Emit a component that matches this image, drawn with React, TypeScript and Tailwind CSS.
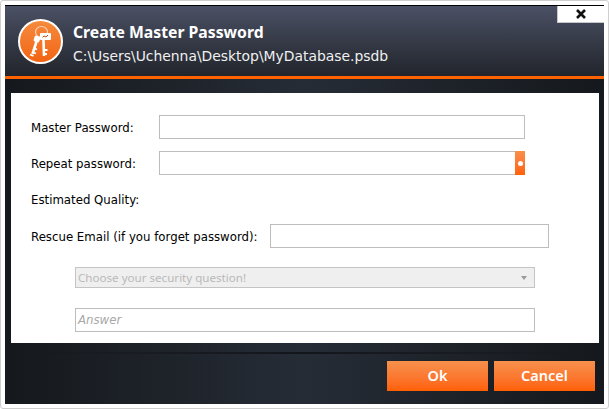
const font = { fontFamily: '"DejaVu Sans", sans-serif' };
const noto = { fontFamily: '"Noto Sans", sans-serif' };

function KeysIcon() {
  return (
    <svg width="34" height="38" viewBox="0 0 34 38" fill="none">
      <ellipse cx="17.5" cy="10" rx="6" ry="5.5" stroke="#f9d3b8" strokeWidth="1.2" />
      {/* back key */}
      <rect x="10" y="14" width="6" height="6" rx="1.5" fill="#fff" transform="rotate(18 13 17)" />
      <path d="M13 18 L8.5 32" stroke="#fff" strokeWidth="2.6" />
      <path d="M8 30 L12 31.5 M9.5 26 L13 27.5 M6 32.5 L9.5 34" stroke="#fff" strokeWidth="1.7" />
      {/* front key */}
      <path d="M19.5 18 L20 34" stroke="#fff" strokeWidth="2.6" />
      <path d="M20 28 L23.5 28 M20 32 L23 32" stroke="#fff" strokeWidth="1.8" />
      <rect x="16" y="11" width="11" height="7" rx="1" fill="#fff" />
      <path d="M18.5 15.5 L20 14 L22 15 L24 13" stroke="#c2500f" strokeWidth="1" />
    </svg>
  );
}

function Field({ className }: { className: string }) {
  return <input className={`h-6 border border-[#bdbdbd] bg-white outline-none ${className}`} />;
}

export default function App() {
  return (
    <div className="h-[409px] w-[609px] overflow-hidden rounded-[3px] border border-[#cfcfcf] bg-white p-1" style={font}>
      <div className="flex h-[399px] w-[599px] flex-col border-t border-black bg-[#1a1f25]">
        {/* Header */}
        <div className="relative flex h-[73px] shrink-0 items-center gap-[10px] border-b-[3px] border-[#ff6200] bg-gradient-to-b from-[#4b5165] to-[#22252c] pl-[13px]">
          <div className="flex h-[45px] w-[45px] items-center justify-center rounded-full border-2 border-white bg-gradient-to-b from-[#f58a3c] to-[#f2640f]">
            <KeysIcon />
          </div>
          <div className="pt-[5px] text-white">
            <div className="text-[15.75px] leading-[22px] font-bold" style={noto}>Create Master Password</div>
            <div className="mt-[3px] text-[13.9px] leading-[20px] text-[#f0f0f0]">C:\Users\Uchenna\Desktop\MyDatabase.psdb</div>
          </div>
          <div className="absolute top-0 right-0 flex h-[17px] w-[47px] items-center justify-center border-b border-l border-[#c8c8c8] bg-white">
            <svg width="10" height="10" viewBox="0 0 10 10">
              <path d="M1 1 L9 9 M9 1 L1 9" stroke="#111" strokeWidth="2.6" />
            </svg>
          </div>
        </div>

        {/* Form panel + footer share one background */}
        <div className="flex flex-1 flex-col bg-gradient-to-r from-[#15191d] via-[#262c36] to-[#15191d] px-[6px] pt-[14px]">
          <div className="h-[250px] w-[588px] bg-white pt-[22px] pl-5 text-[11.75px] text-black">
            <div className="flex h-6 items-center">
              <span className="w-[128px] pt-[3px]">Master Password:</span>
              <Field className="w-[366px]" />
            </div>
            <div className="mt-3 flex h-6 items-center">
              <span className="w-[128px] pt-[3px]">Repeat password:</span>
              <div className="flex w-[366px]">
                <Field className="min-w-0 flex-1 border-r-0" />
                <div className="flex w-[10px] items-center justify-center bg-gradient-to-b from-[#f98f4c] to-[#ff6000]">
                  <div className="h-[5px] w-[5px] rounded-full bg-white" />
                </div>
              </div>
            </div>
            <div className="mt-[15px] leading-[20px]">Estimated Quality:</div>
            <div className="mt-[14px] flex h-6 items-center">
              <span className="w-[239px] pt-[3px]">Rescue Email (if you forget password):</span>
              <Field className="w-[279px]" />
            </div>
            <div className="mt-[19px] ml-11 flex h-[21px] w-[460px] items-center justify-between border border-[#c4c4c4] bg-[#efefef] pr-[7px] pl-[2px] text-[11.6px] text-[#b9b9b9]" style={noto}>
              <span>Choose your security question!</span>
              <div className="h-0 w-0 border-x-[3px] border-t-[4px] border-x-transparent border-t-[#9a9a9a]" />
            </div>
            <div className="mt-5 ml-11 flex h-6 w-[460px] items-center border border-[#bdbdbd] pt-[2px] pl-[2px] text-[#a8a8a8] italic">Answer</div>
          </div>

          {/* Footer */}
          <div className="mt-[9px] h-[2px] bg-gradient-to-r from-transparent via-[#12151a] to-transparent" />
          <div className="mt-[7px] flex justify-end gap-[6px] pr-[3px]">
            <button className="h-[30px] w-[101px] bg-gradient-to-b from-[#f6914c] to-[#ff5f00] text-[14.5px] font-semibold text-white" style={noto}>Ok</button>
            <button className="h-[30px] w-[101px] bg-gradient-to-b from-[#f6914c] to-[#ff5f00] text-[14.5px] font-semibold text-white" style={noto}>Cancel</button>
          </div>
        </div>
      </div>
    </div>
  );
}
